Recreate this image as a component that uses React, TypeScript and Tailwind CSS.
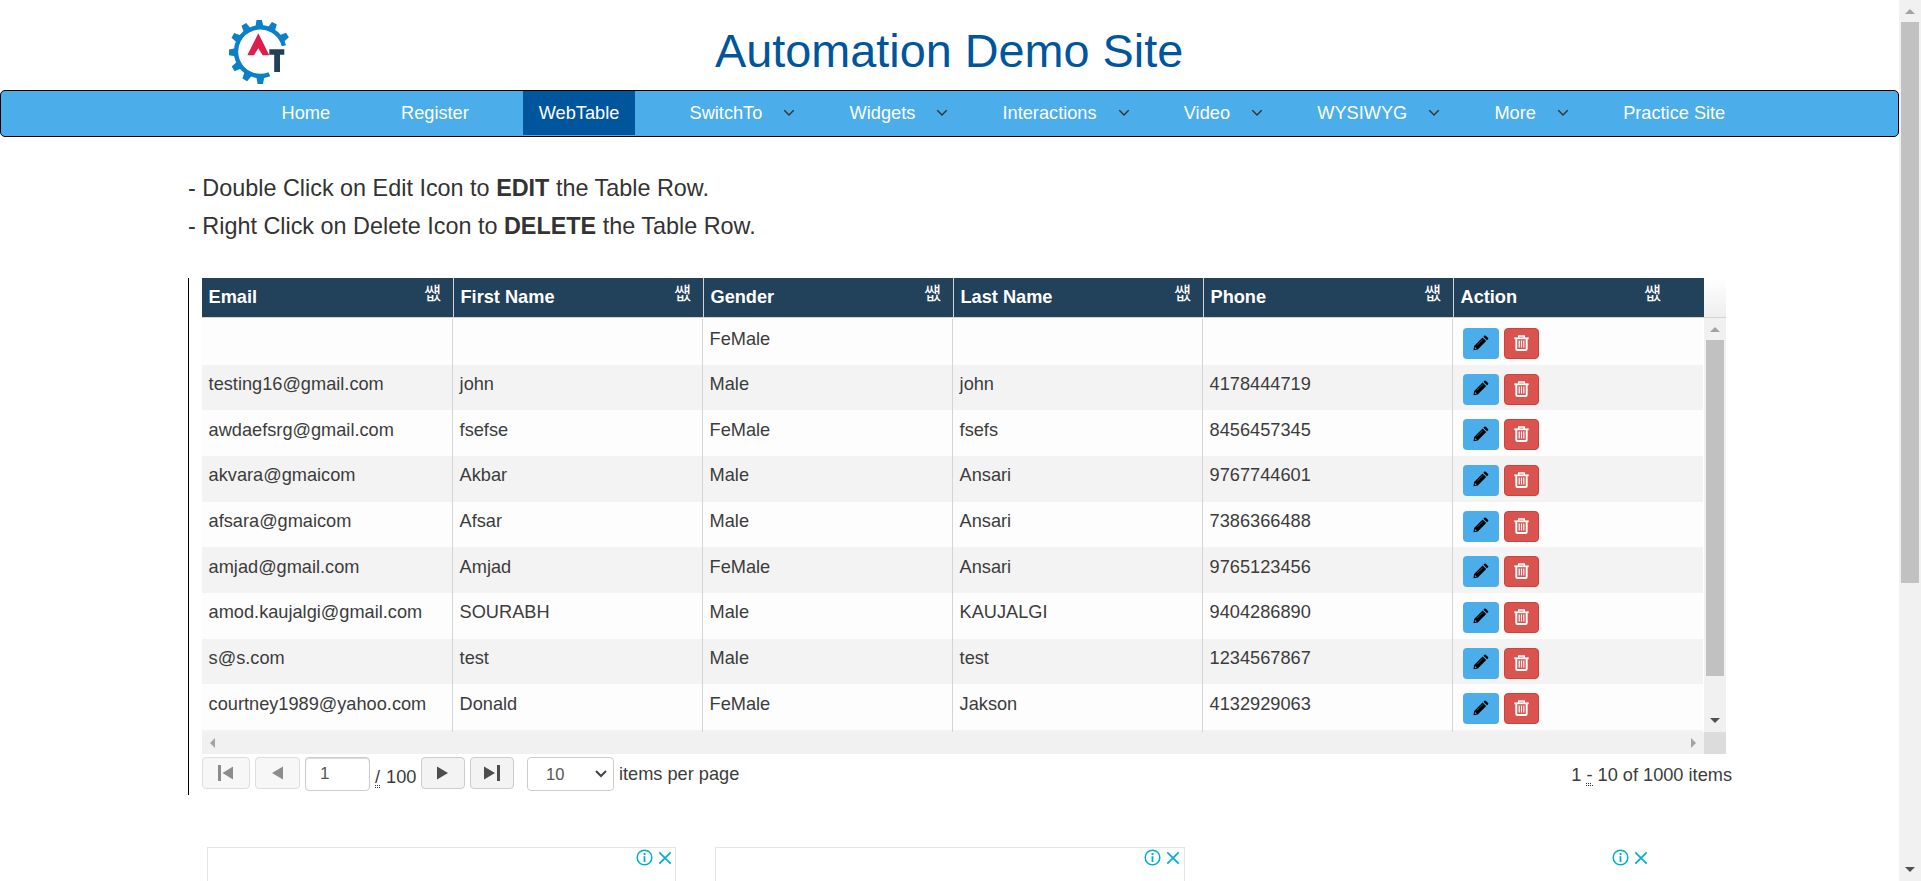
import React from "react";

const rows = [
  ["", "", "FeMale", "", ""],
  ["testing16@gmail.com", "john", "Male", "john", "4178444719"],
  ["awdaefsrg@gmail.com", "fsefse", "FeMale", "fsefs", "8456457345"],
  ["akvara@gmaicom", "Akbar", "Male", "Ansari", "9767744601"],
  ["afsara@gmaicom", "Afsar", "Male", "Ansari", "7386366488"],
  ["amjad@gmail.com", "Amjad", "FeMale", "Ansari", "9765123456"],
  ["amod.kaujalgi@gmail.com", "SOURABH", "Male", "KAUJALGI", "9404286890"],
  ["s@s.com", "test", "Male", "test", "1234567867"],
  ["courtney1989@yahoo.com", "Donald", "FeMale", "Jakson", "4132929063"],
  ["", "", "", "", ""],
];
const headers = ["Email", "First Name", "Gender", "Last Name", "Phone", "Action"];

function Tri({ dir, className }: { dir: "up" | "down" | "left" | "right"; className: string }) {
  const d = {
    up: "M0 5 L5 0 L10 5Z",
    down: "M0 0 H10 L5 5Z",
    left: "M5 0 V10 L0 5Z",
    right: "M0 0 V10 L5 5Z",
  }[dir];
  const v = dir === "up" || dir === "down";
  return (
    <svg width={v ? 10 : 5} height={v ? 5 : 10} className={className}>
      <path d={d} fill="currentColor" />
    </svg>
  );
}

const toothAngles = [-149, -121, -92, -64, -32, 90, 119, 148, 179];

function Logo() {
  return (
    <svg width="64" height="66" viewBox="0 0 64 66">
      <path d="M54.9 25.8 A24.3 24.3 0 1 0 40.4 54.2" fill="none" stroke="#0a80c8" strokeWidth="4.4" />
      {toothAngles.map((a) => (
        <path key={a} d="M25 -4 L32 -2.7 V2.7 L25 4Z" fill="#0a80c8" transform={`translate(31.3 31.9) rotate(${a})`} />
      ))}
      <path d="M29.3 13.3 L40.3 35.3 H33.6 L29.3 28.3 L25 35.3 H18.3Z" fill="#dc1f4c" />
      <path d="M40.3 29.3 H55.3 V34.8 H51 V52 H45.2 V34.8 H40.3Z" fill="#23405a" />
    </svg>
  );
}

function NavItem({ label, ml, arrow, active }: { label: string; ml: string; arrow?: boolean; active?: boolean }) {
  return (
    <div className={`${ml} flex h-[44px] shrink-0 items-center whitespace-nowrap text-[18.2px] leading-[24px] text-white ${active ? "bg-[#00569d]" : ""}`}>
      <span className={active ? "px-4" : ""}>{label}</span>
      {arrow && (
        <svg width="12" height="8" viewBox="0 0 12 8" className="ml-[21px]">
          <path d="M1.3 1.3 L6 6 L10.7 1.3" fill="none" stroke="#333" strokeWidth="1.4" />
        </svg>
      )}
    </div>
  );
}

function Pencil() {
  return (
    <svg width="16" height="16" viewBox="0 0 16 16">
      <path d="M0.5 15.3 L1.1 11 L9.6 2.5 L13.2 6.1 L4.8 14.6Z M10.4 1.7 L11.6 .6 Q12.2 .2 12.8 .7 L15.1 3 Q15.6 3.6 15.1 4.2 L14 5.3Z" fill="#000" />
      <path d="M4 10.3 L9.8 4.5" stroke="#4badea" strokeWidth=".5" />
      <path d="M1.9 12.6 L3.2 13.9" stroke="#4badea" strokeWidth="1.1" />
    </svg>
  );
}

function Trash() {
  return (
    <svg width="15" height="16" viewBox="0 0 15 16" fill="none" stroke="#fff">
      <path d="M.3 3.3 H14.7" strokeWidth="1.8" />
      <path d="M4.7 3 V1 H10.3 V3" strokeWidth="1.4" />
      <path d="M2.3 4 V14 Q2.3 15 3.3 15 H11.7 Q12.7 15 12.7 14 V4" strokeWidth="1.9" />
      <path d="M5.2 5.5 V12.5 M7.5 5.5 V12.5 M9.8 5.5 V12.5" strokeWidth="1.2" />
    </svg>
  );
}

function AdMarks() {
  return (
    <div className="flex items-center gap-[5px]">
      <svg width="17" height="17" viewBox="0 0 17 17" fill="none" stroke="#00aecd">
        <circle cx="8.5" cy="8.5" r="7.3" strokeWidth="1.5" />
        <path d="M8.5 7.2 V13 M8.5 4 V6" strokeWidth="1.8" />
      </svg>
      <svg width="14" height="14" viewBox="0 0 14 14" fill="none" stroke="#00aecd" strokeWidth="1.7">
        <path d="M1.3 1.3 L12.7 12.7 M12.7 1.3 L1.3 12.7" />
      </svg>
    </div>
  );
}

function Abbr({ children }: { children: string }) {
  return (
    <span>
      <span className="border-b border-dotted border-[#333] underline decoration-[#333] decoration-dotted decoration-1 underline-offset-2">{children}</span>
    </span>
  );
}

export default function App() {
  return (
    <div className="flex h-[881px] w-[1921px] overflow-hidden bg-white font-['Liberation_Sans','Noto_Sans_CJK_KR',sans-serif] text-[#333]">
      <div className="flex w-[1899px] flex-col">
        <header className="flex h-[90px] shrink-0 pl-[229px] pt-[20px]">
          <Logo />
          <h1 className="ml-[422px] pt-[4px] text-[46.8px] leading-[54px] text-[#00569d]">Automation Demo Site</h1>
        </header>
        <nav className="flex h-[47px] shrink-0 rounded-[5px] border border-black bg-[#4badea]">
          <NavItem label="Home" ml="ml-[280.5px]" />
          <NavItem label="Register" ml="ml-[71px]" />
          <NavItem label="WebTable" ml="ml-[54px]" active />
          <NavItem label="SwitchTo" ml="ml-[54.25px]" arrow />
          <NavItem label="Widgets" ml="ml-[54.25px]" arrow />
          <NavItem label="Interactions" ml="ml-[54.25px]" arrow />
          <NavItem label="Video" ml="ml-[54.25px]" arrow />
          <NavItem label="WYSIWYG" ml="ml-[54.25px]" arrow />
          <NavItem label="More" ml="ml-[54.25px]" arrow />
          <NavItem label="Practice Site" ml="ml-[54.25px]" />
        </nav>
        <div className="mt-[32px] h-[109px] shrink-0 pl-[188px] text-[23.4px] leading-[38px]">
          <p>- Double Click on Edit Icon to <b>EDIT</b> the Table Row.</p>
          <p>- Right Click on Delete Icon to <b>DELETE</b> the Table Row.</p>
        </div>
        <section className="ml-[188px] h-[517px] w-[1544px] shrink-0 border-l border-black pl-[13px]">
          <div className="flex h-[40px] w-[1524px] border-b border-[#d4d4d4] bg-linear-to-b from-white to-[#eee]">
            <div className="flex h-[39px] w-[1502px] bg-[#22415a]">
              {headers.map((h, i) => (
                <div key={h} className={`flex h-[39px] shrink-0 justify-between text-[18.2px] font-bold leading-[38px] text-white ${i ? "w-[250px] pl-[6.5px]" : "w-[252px] pl-[6.5px]"} ${i < 5 ? "border-r border-[#d4d4d4] pr-[12px]" : "pr-[43px]"}`}>
                  <span>{h}</span>
                  <span className="text-[18.2px] font-normal leading-[32px]">썞</span>
                </div>
              ))}
            </div>
          </div>
          <div className="flex h-[414px] w-[1524px]">
            <div className="h-[414px] w-[1502px] overflow-hidden pt-[1px]">
              {rows.map((r, i) => (
                <div key={i} className={`flex h-[45.67px] w-[1501px] ${i % 2 ? "bg-[#f3f3f3]" : "bg-[#fdfdfd]"}`}>
                  {r.map((c, j) => (
                    <div key={j} className={`h-full shrink-0 border-r border-[#d4d4d4] pl-[6.6px] pt-[6.5px] text-[18.2px] leading-[26px] text-[#3c3c3c] ${j ? "w-[250px]" : "w-[251px]"}`}>{c}</div>
                  ))}
                  <div className="flex gap-[5px] pl-[10px] pt-[9px]">
                    <span className="flex h-[31px] w-[36px] items-center justify-center rounded-[4px] bg-[#4badea] pb-[2px]"><Pencil /></span>
                    <span className="flex h-[31px] w-[35px] items-center justify-center rounded-[4px] border border-[#d43f3a] bg-[#d9534f] pb-px"><Trash /></span>
                  </div>
                </div>
              ))}
            </div>
            <div className="flex w-[22px] flex-col items-center bg-[#f1f1f1]">
              <Tri dir="up" className="mt-[9px] text-[#a3a3a3]" />
              <div className="mt-[8px] h-[336px] w-[18px] bg-[#c1c1c1]" />
              <Tri dir="down" className="mb-[9px] mt-auto text-[#505050]" />
            </div>
          </div>
          <div className="flex h-[22px] w-[1524px]">
            <div className="flex w-[1502px] items-center justify-between bg-[#f1f1f1] px-[8px] text-[#a3a3a3]">
              <Tri dir="left" className="" />
              <Tri dir="right" className="" />
            </div>
            <div className="w-[22px] bg-[#dcdcdc]" />
          </div>
          <div className="flex h-[41px] items-start pt-[3px] text-[18.2px] text-[#3c3c3c]">
            <span className="flex h-[32px] w-[48px] items-center justify-center rounded-[4px] border border-[#ddd] bg-[#f7f7f7]">
              <svg width="16" height="16"><path d="M0 0H3V16H0Z M15 1.5V14.5L4.5 8Z" fill="#8c8c8c" /></svg>
            </span>
            <span className="ml-[5px] flex h-[32px] w-[45px] items-center justify-center rounded-[4px] border border-[#ddd] bg-[#f7f7f7]">
              <svg width="11" height="14"><path d="M11 .5V13.5L0 7Z" fill="#8c8c8c" /></svg>
            </span>
            <span className="ml-[5px] h-[34px] w-[65px] rounded-[4px] border border-[#ccc] pl-[14px] text-[17px] leading-[32px] text-[#555] shadow-[inset_0_1px_1px_rgba(0,0,0,0.15)]">1</span>
            <span className="ml-[5px] mt-[7px] flex w-[42px] gap-[6px] leading-[26px]"><Abbr>/</Abbr>100</span>
            <span className="ml-[4px] flex h-[32px] w-[44px] items-center justify-center rounded-[4px] border border-[#ccc] bg-[#f3f3f3] pr-[2px]">
              <svg width="11" height="14"><path d="M0 .5V13.5L11 7Z" fill="#4d4d4d" /></svg>
            </span>
            <span className="ml-[5px] flex h-[32px] w-[44px] items-center justify-center rounded-[4px] border border-[#ccc] bg-[#f3f3f3]">
              <svg width="16" height="16"><path d="M13 0H16V16H13Z M0 1.5V14.5L11 8Z" fill="#4d4d4d" /></svg>
            </span>
            <span className="ml-[13px] flex h-[34px] w-[87px] items-center justify-between rounded-[4px] border border-[#ccc] pl-[18px] pr-[6px] text-[16.5px] text-[#555]">
              10
              <svg width="12" height="8"><path d="M1 1L6 6L11 1" fill="none" stroke="#444" strokeWidth="2" /></svg>
            </span>
            <span className="ml-[5px] mt-[4px] leading-[26px]">items per page</span>
            <span className="ml-auto mt-[5px] flex gap-[5px] leading-[26px]">1<Abbr>-</Abbr>10 of 1000 items</span>
          </div>
        </section>
        <div className="mt-[52px] flex h-[34px] shrink-0 pl-[207px]">
          <div className="flex h-[50px] w-[469px] items-start justify-end border border-[#e4e4e4] pr-[3px] pt-px"><AdMarks /></div>
          <div className="ml-[39px] flex h-[50px] w-[470px] items-start justify-end border border-[#e4e4e4] pr-[4px] pt-px"><AdMarks /></div>
          <div className="ml-[427px] pt-[2px]"><AdMarks /></div>
        </div>
      </div>
      <div className="flex h-full w-[22px] flex-col items-center bg-[#f1f1f1]">
        <Tri dir="up" className="mt-[9px] text-[#a3a3a3]" />
        <div className="mt-[8px] h-[561px] w-[18px] bg-[#c1c1c1]" />
        <Tri dir="down" className="mb-[9px] mt-auto text-[#505050]" />
      </div>
    </div>
  );
}
